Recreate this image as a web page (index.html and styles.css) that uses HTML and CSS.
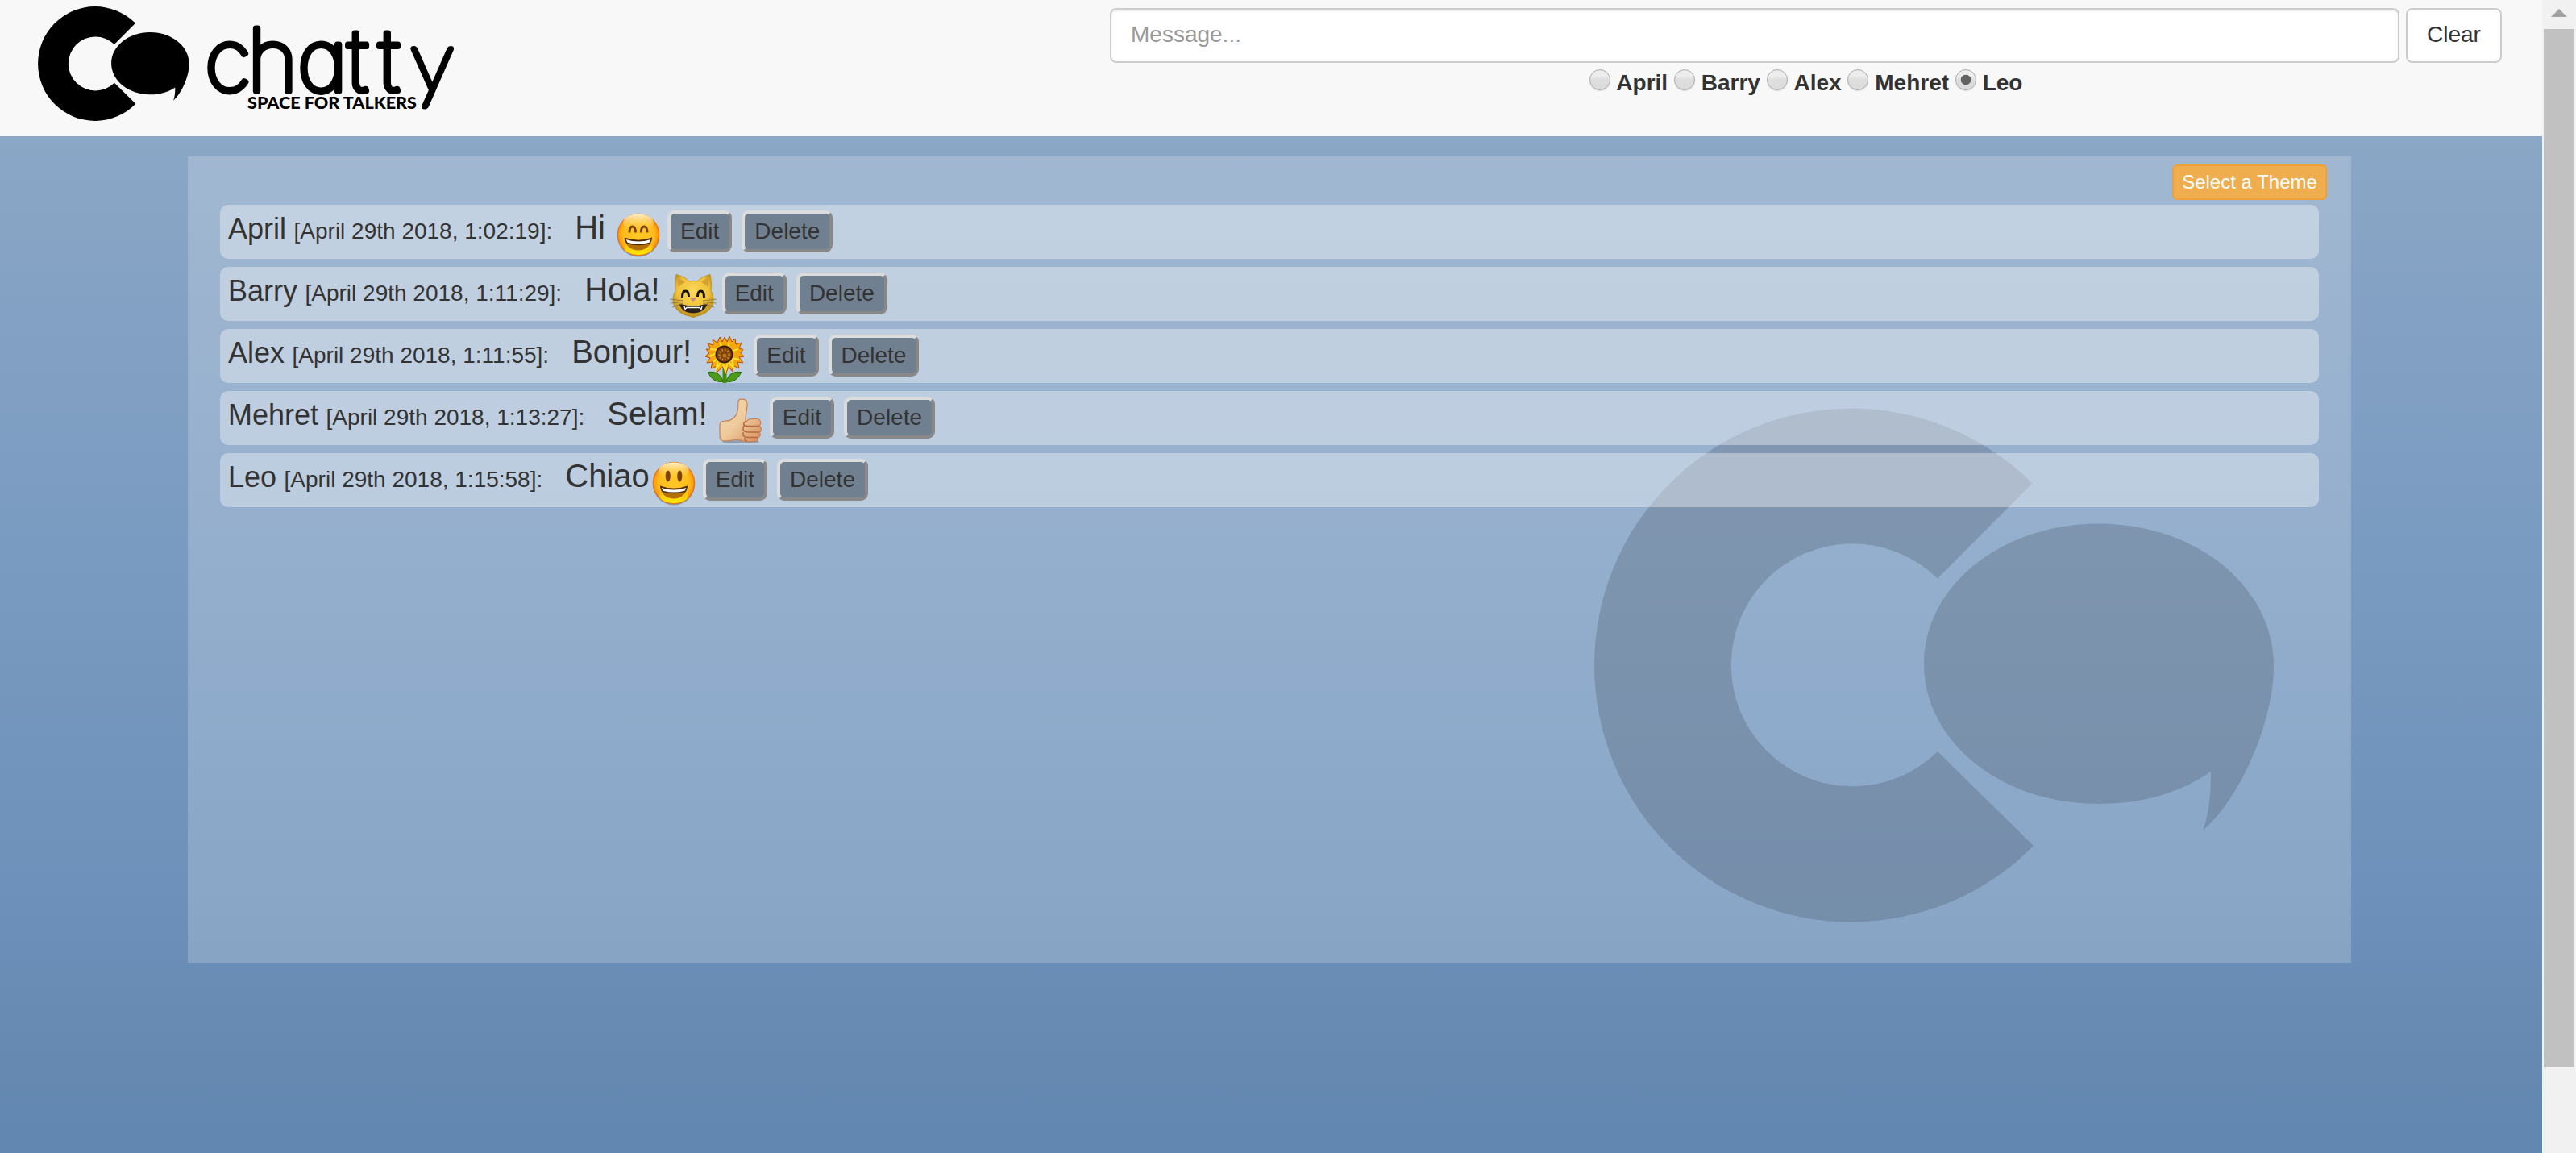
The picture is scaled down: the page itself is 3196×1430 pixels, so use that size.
FILE: index.html
```html
<!DOCTYPE html>
<html lang="en">
<head>
<meta charset="utf-8">
<title>Chatty</title>
<link rel="stylesheet" href="styles.css">
</head>
<body>
<svg class="defs" aria-hidden="true">
  <defs>
    <radialGradient id="face" cx=".5" cy=".5" r=".5">
      <stop offset="0" stop-color="#ffc825"/><stop offset=".72" stop-color="#ffbd1c"/><stop offset=".9" stop-color="#fda012"/><stop offset="1" stop-color="#e9680a"/>
    </radialGradient>
    <linearGradient id="shine" x1="0" y1="0" x2="0" y2="1">
      <stop offset="0" stop-color="#fff3cf"/><stop offset="1" stop-color="#ffd04a" stop-opacity="0"/>
    </linearGradient>
    <linearGradient id="glow" x1="0" y1="0" x2="0" y2="1">
      <stop offset="0" stop-color="#ffe600" stop-opacity="0"/><stop offset="1" stop-color="#ffee00"/>
    </linearGradient>
    <radialGradient id="fur" cx=".5" cy=".4" r=".6">
      <stop offset="0" stop-color="#fbd85c"/><stop offset=".65" stop-color="#f0c138"/><stop offset="1" stop-color="#b98a16"/>
    </radialGradient>
    <linearGradient id="skin" x1="0" y1="0" x2="1" y2="1">
      <stop offset="0" stop-color="#f5d8ae"/><stop offset=".5" stop-color="#efcb9c"/><stop offset="1" stop-color="#d58c5e"/>
    </linearGradient>
    <symbol id="mark" viewBox="0 0 844 638">
      <path d="M543.5 93.600A318.500 318.500 0 1 0 545 543L426 426A150.500 150.500 0 1 1 425.800 211.500Z"/>
      <path d="M625 143.500C748 143.500 843 222 843 320C843 388 803 482 755 524C762 505 765 482 765 451C727 477 681 491 625 491C505 491 409 414 409 317C409 221 505 143.500 625 143.500Z"/>
    </symbol>
    <symbol id="ball" viewBox="0 0 60 60">
      <ellipse cx="30" cy="31.500" rx="26" ry="26" fill="#4c4f55" opacity=".45"/>
      <circle cx="30" cy="30" r="26.300" fill="url(#face)"/>
      <ellipse cx="30" cy="15" rx="19" ry="10.500" fill="url(#shine)"/>
      <ellipse cx="30" cy="46" rx="18" ry="9" fill="url(#glow)"/>
      <path d="M12.800 33.500Q30 40 47.200 33.500C46 44 39 49.500 30 49.500S14 44 12.800 33.500Z" fill="#b56f08"/>
      <path d="M12.800 33.500Q30 40 47.200 33.500Q46.500 38 44.500 41Q30 45.500 15.500 41Q13.500 38 12.800 33.500Z" fill="#4d2a00"/>
      <path d="M14.700 36Q30 41 45.300 36Q44.500 38.500 43.500 39.700Q30 43.500 16.500 39.700Z" fill="#fff"/>
    </symbol>
    <symbol id="grin" viewBox="0 0 60 60">
      <use href="#ball"/>
      <path d="M19 27.500C19 22 20.500 20 22.700 20S26.500 22 26.500 27.500M33.300 27.500C33.300 22 35 20 37.200 20S41 22 41 27.500" fill="none" stroke="#7b4300" stroke-width="2.800"/>
    </symbol>
    <symbol id="smile" viewBox="0 0 60 60">
      <use href="#ball"/>
      <ellipse cx="22.700" cy="21.500" rx="3" ry="7" fill="#7e4200"/>
      <ellipse cx="37.300" cy="21.500" rx="3" ry="7" fill="#7e4200"/>
    </symbol>
    <symbol id="cat" viewBox="0 0 60 60">
      <path d="M9 2.500C16 4 21 7 25 11Q30 9.500 35 11C39 7 44 4 51 2.500C53 11 52.500 18 52 23C55 28 56 34 54 40C51 47 44 52 37 53.500Q32 54.500 30 56Q28 54.500 23 53.500C16 52 9 47 6 40C4 34 5 28 8 23C7.500 18 7 11 9 2.500Z" fill="url(#fur)" stroke="#b58515" stroke-width=".7"/>
      <path d="M11 6L20 11.500L11 18ZM49 6L40 11.500L49 18Z" fill="#d3a130"/>
      <path d="M16.500 31C16.500 25 18 23 20.500 23S24.500 25 24.500 30M35.500 30C35.500 25 37 23 39.500 23S43.500 25 43.500 31" fill="none" stroke="#17130a" stroke-width="3"/>
      <path d="M12.500 38.500Q30 44 48 38.500C45 47 38 50.500 30 50.500S15 47 12.500 38.500Z" fill="#29211a"/>
      <path d="M19 42L20 45.500L22 43.500H38L40 45.500L41 42" fill="none" stroke="#fff" stroke-width="1.300"/>
      <path d="M26.500 31H33.500Q34 33 30 36Q26 33 26.500 31Z" fill="#c48a74"/>
      <path d="M1 33L18 35M1.500 38L18 36.500M4 43L18 38M59 33L42 35M58.500 38L42 36.500M56 43L42 38" stroke="#8a7440" stroke-width=".9"/>
    </symbol>
    <symbol id="sunflower" viewBox="0 0 60 60">
      <path d="M27.500 40H32.500V60H27.500Z" fill="#3f8d0e"/>
      <path d="M28 58C20 60 13 55 9.500 46.500C18 45.500 25 48 28 58ZM32 58C40 60 47 55 50.500 46.500C42 45.500 35 48 32 58Z" fill="#4c9c1a" stroke="#246306"/>
      <path d="M30 3L33 9L36 2L39 9L43 5L44 12L51 10L48 17L53 18.500L49.500 23L54 27L48 28L53 35L46 34L48 42L40 38L40 46L35 40L31 49L28 40L20 47L21 39L13 42L15 34L8 35L12 29L6 27L11 23L7 18L13 18L9 11L16 13L15 6L21 10L24 3L27 9Z" fill="#f6a50c" stroke="#b84a04" stroke-width="1"/>
      <path d="M16 34L22 29L20 42L27 33L31 45L34 33L41 41L39 29L48 31M11 27L20 23M12 18L21 19M24 10L27 16M36 10L34 16M47 18L40 20" fill="none" stroke="#ffe32a" stroke-width="2.200"/>
      <circle cx="29.500" cy="24.500" r="11" fill="#361b05"/>
      <circle cx="29.500" cy="24.500" r="9.300" fill="#81430c"/>
      <circle cx="29.500" cy="25" r="6" fill="none" stroke="#c98a2c" stroke-width="2.500" stroke-dasharray="1.500 2"/>
      <circle cx="30" cy="26" r="2.500" fill="#b97a22"/>
    </symbol>
    <symbol id="thumb" viewBox="0 0 60 60">
      <ellipse cx="30" cy="56" rx="23" ry="2" fill="#3d4652" opacity=".35"/>
      <path d="M27 6C28 1.500 37.500 2 38 8C38.500 15 36 20 36 28C36 30 37 31 37 31C39 27 44 27 50 27.500C56 28 55.500 35 53 36C56 38 56 43 53 44C55 46 54.500 50 51.500 50.500C52 54.500 50 55.500 46 55.500H36C31 55.500 29 53 24 53.500C17 54 12 56 7 54.500Q4 53 4 49V36C4 30 8 30 12 30C19 30 25 24 26 18C27 14 26.500 10 27 6Z" fill="url(#skin)" stroke="#c58256" stroke-width="1.200"/>
      <path d="M37 30.500C31 33 34 36.500 38 36.500H53M34 36C31 42 35 44 39 44H53M33.500 44C31 49 36 50.500 40 50.500H51M35 51C34 53 36 55 38 55" fill="none" stroke="#b8683f" stroke-width="1.500"/>
    </symbol>
  </defs>
</svg>
<div class="window">
  <div class="page">
    <header class="navbar">
      <div class="brand">
        <svg class="brand-mark"><use href="#mark"/></svg>
        <svg class="wordmark" viewBox="250 0 330 169">
          <text class="word" y="112.500" x="254 307 369 431 470">chatt<tspan class="tail" x="510">y</tspan></text>
          <text class="tagline" x="307" y="135" textLength="210" lengthAdjust="spacingAndGlyphs">SPACE FOR TALKERS</text>
        </svg>
      </div>
      <div class="composer">
        <div class="entry">
          <input class="message-input" type="text" placeholder="Message...">
          <button class="clear">Clear</button>
        </div>
        <div class="users">
          <label><i class="radio"></i>April</label>
          <label><i class="radio"></i>Barry</label>
          <label><i class="radio"></i>Alex</label>
          <label><i class="radio"></i>Mehret</label>
          <label><i class="radio checked"></i>Leo</label>
        </div>
      </div>
    </header>
    <main class="panel">
      <svg class="watermark"><use href="#mark"/></svg>
      <button class="theme">Select a Theme</button>
      <div class="messages">
        <div class="row"><span class="name">April</span><span class="time">[April 29th 2018, 1:02:19]:</span><span class="text">Hi&nbsp;</span><svg class="emoji"><use href="#grin"/></svg><button class="action">Edit</button><button class="action">Delete</button></div>
        <div class="row"><span class="name">Barry</span><span class="time">[April 29th 2018, 1:11:29]:</span><span class="text">Hola!&nbsp;</span><svg class="emoji"><use href="#cat"/></svg><button class="action">Edit</button><button class="action">Delete</button></div>
        <div class="row"><span class="name">Alex</span><span class="time">[April 29th 2018, 1:11:55]:</span><span class="text">Bonjour!&nbsp;</span><svg class="emoji"><use href="#sunflower"/></svg><button class="action">Edit</button><button class="action">Delete</button></div>
        <div class="row"><span class="name">Mehret</span><span class="time">[April 29th 2018, 1:13:27]:</span><span class="text">Selam!&nbsp;</span><svg class="emoji"><use href="#thumb"/></svg><button class="action">Edit</button><button class="action">Delete</button></div>
        <div class="row"><span class="name">Leo</span><span class="time">[April 29th 2018, 1:15:58]:</span><span class="text">Chiao</span><svg class="emoji"><use href="#smile"/></svg><button class="action">Edit</button><button class="action">Delete</button></div>
      </div>
    </main>
  </div>
  <div class="scrollbar">
    <svg class="arrow" viewBox="0 0 20 10"><path d="M0 10L10 0L20 10Z"/></svg>
    <div class="thumb"></div>
  </div>
</div>
</body>
</html>
```
FILE: styles.css
```css
* { box-sizing: border-box; }
body {
  margin: 0;
  font: 28px/40px "Liberation Sans", Arial, sans-serif;
  color: #333;
  overflow: hidden;
}
button, input { font: inherit; color: inherit; margin: 0; }
.defs { position: absolute; width: 0; height: 0; }
.window { display: flex; height: 1430px; }
.page {
  flex: 1;
  background: linear-gradient(#8ba7c6 169px, #83a1c4 390px, #7a9bc1 680px, #6d91ba 1100px, #668ab2 1290px, #6287b0 1430px);
}

/* Header */
.navbar {
  height: 169px;
  background: #f8f8f8;
  display: flex;
  justify-content: space-between;
  padding: 0 50px 0 47px;
}
.brand { display: flex; align-items: flex-start; }
.brand-mark { width: 188px; height: 142px; margin-top: 8px; }
.wordmark { width: 330px; height: 169px; margin-left: 15px; }
.word {
  font: 100 107px Inter, sans-serif;
  font-feature-settings: "cv11";
  stroke: #000;
  stroke-width: 7px;
  stroke-linejoin: round;
}
.tail { font-family: Lato, sans-serif; }
.tagline { font: 900 20px Lato, sans-serif; }
.composer { width: 1727px; padding-top: 10px; }
.entry { display: flex; gap: 8px; }
.message-input {
  flex: 1;
  height: 68px;
  padding: 0 24px 2px;
  border: 2px solid #ccc;
  border-radius: 8px;
  background: #fff;
  box-shadow: inset 0 2px 2px rgba(0, 0, 0, .075);
}
.message-input::placeholder { color: #999; opacity: 1; }
.clear {
  width: 119px;
  height: 68px;
  padding: 0 0 2px;
  border: 2px solid #ccc;
  border-radius: 8px;
  background: #fff;
}
.users {
  display: flex;
  justify-content: center;
  gap: 7.8px;
  height: 44px;
  padding-top: 5px;
  font-weight: bold;
}
.users label { display: flex; gap: 7.8px; }
.radio {
  width: 26px;
  height: 26px;
  margin-top: 3px;
  border: 1px solid #aaa;
  border-radius: 50%;
  background: linear-gradient(#ededed 0 30%, #dedede 50%, #dcdcdc);
  box-shadow: 0 1px 1px rgba(0, 0, 0, .12);
}
.radio.checked {
  background: radial-gradient(circle, #636363 0 6px, transparent 6.6px), linear-gradient(#ededed 0 30%, #dedede 50%, #dcdcdc);
}

/* Chat panel */
.panel {
  position: relative;
  height: 1000px;
  margin: 25px 237px 0 233px;
  padding: 10px 40px 0;
  background: rgba(255, 255, 255, .2);
  display: flex;
  flex-direction: column;
}
.watermark {
  position: absolute;
  right: 95px;
  top: 312px;
  width: 844px;
  height: 638px;
  opacity: .14;
}
.theme {
  align-self: flex-end;
  width: 192px;
  height: 44px;
  margin-right: -10px;
  padding: 0;
  font-size: 24px;
  line-height: 36px;
  color: #fff;
  background: #f0ad4e;
  border: 2px solid #eea236;
  border-radius: 6px;
  white-space: nowrap;
}
.messages {
  position: relative;
  display: flex;
  flex-direction: column;
  gap: 10px;
  margin-top: 6px;
}
.row {
  display: flex;
  align-items: flex-start;
  height: 67px;
  padding-left: 10px;
  border-radius: 10px;
  background: rgba(255, 255, 255, .37);
  overflow: hidden;
  white-space: nowrap;
}
.name { font-size: 36px; line-height: 60px; margin-right: 9.500px; }
.time { line-height: 65px; margin-right: 28px; }
.text { font-size: 40px; line-height: 57px; }
.emoji { flex: none; width: 60px; height: 60px; margin: 7px 6px 0 0; }
.action {
  height: 52px;
  margin: 7px 12px 0 0;
  padding: 2px 12px;
  background: #708090;
  border: 4px solid;
  border-color: #dcdcdc #888 #888 #dcdcdc;
  border-radius: 9px;
}

/* Scrollbar */
.scrollbar {
  width: 42px;
  background: #f1f1f1;
  padding: 11px 2px 0;
}
.arrow { display: block; width: 20px; height: 10px; margin: 0 auto 15px; fill: #a3a3a3; }
.thumb { height: 1287px; background: #c1c1c1; }
```
